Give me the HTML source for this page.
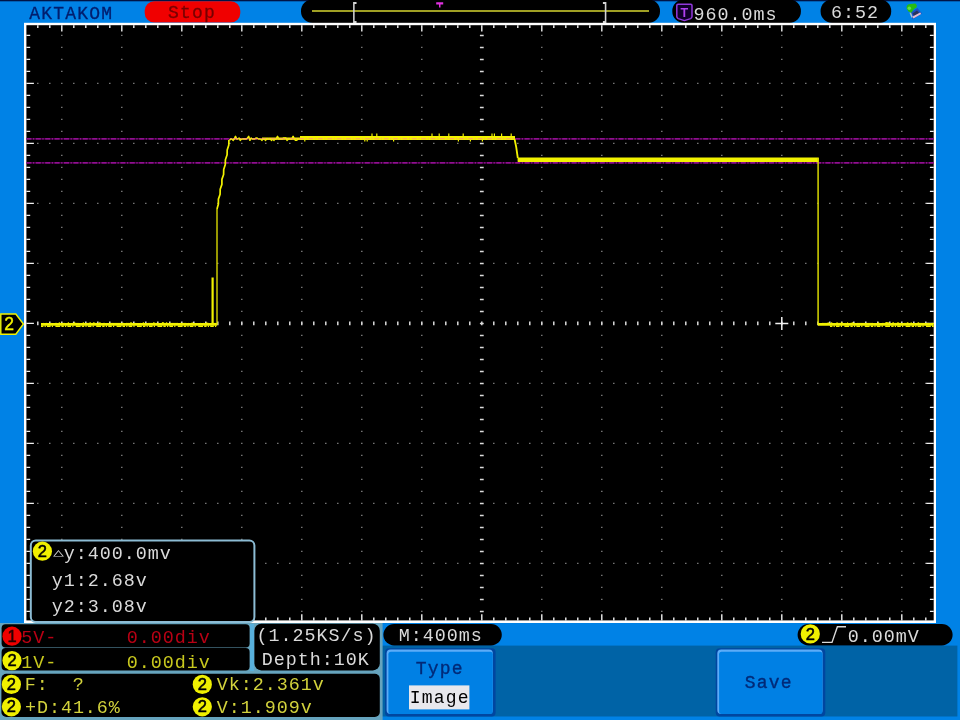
<!DOCTYPE html>
<html lang="en">
<head>
<meta charset="utf-8">
<title>AKTAKOM oscilloscope</title>
<style>
html,body{margin:0;padding:0;background:#0082E6;overflow:hidden;}
body{width:960px;height:720px;}
svg{display:block;position:absolute;left:0;top:0;filter:blur(0.45px);}
text{font-family:"Liberation Mono","DejaVu Sans Mono",monospace;font-size:18.4px;letter-spacing:0.96px;white-space:pre;}
text.lt{font-size:18px;letter-spacing:1.2px;}
text.br{font-size:21px;letter-spacing:0;font-weight:bold;}
text.ti{font-family:"Liberation Sans","DejaVu Sans",sans-serif;font-size:12.5px;font-weight:bold;letter-spacing:0;}
text.tr{font-family:"DejaVu Sans Mono","DejaVu Sans","Liberation Mono",monospace;font-size:13px;letter-spacing:0;}
text.cn{font-family:"Liberation Sans","DejaVu Sans",sans-serif;font-size:16.5px;letter-spacing:0;}
</style>
</head>
<body>
<svg width="960" height="720" viewBox="0 0 960 720">
<rect x="0" y="0" width="960" height="720" fill="#0082E6"/>
<rect x="0" y="0" width="960" height="1.3" fill="#001446"/>
<text x="29.3" y="18.9" fill="#001E6E" class="lt" stroke="#001E6E" stroke-width="0.3">AKTAKOM</text>
<rect x="144.7" y="1.2" width="95.6" height="21.4" rx="9.5" fill="#F00000"/>
<text x="168.1" y="17.6" fill="#780000" class="lt" stroke="#780000" stroke-width="0.3">Stop</text>
<rect x="301" y="-0.5" width="359" height="23.4" rx="11.5" fill="#000"/>
<line x1="312" y1="11.1" x2="649" y2="11.1" stroke="#D6D630" stroke-width="1.5"/>
<text x="0" y="0" transform="translate(351.1 17.9) scale(0.55 1.05)" fill="#D4D4D4" class="br">[</text>
<text x="0" y="0" transform="translate(601.5 17.9) scale(0.55 1.05)" fill="#D4D4D4" class="br">]</text>
<path d="M436.2 2.3 H443.2 V4.6 H440.5 V7.4 H439 V4.6 H436.2 Z" fill="#E030E0"/>
<rect x="672.3" y="-0.5" width="128.6" height="23.4" rx="11.5" fill="#000"/>
<path d="M678 4.3 H690.8 Q692 4.3 692 5.5 V16.6 Q692 18 690.6 18.6 L684.4 20.6 L678.2 18.6 Q676.8 18 676.8 16.6 V5.5 Q676.8 4.3 678 4.3 Z" fill="#10002A" stroke="#9238DC" stroke-width="1.5" stroke-linejoin="round"/>
<text x="684.4" y="16.9" fill="#B040F0" class="ti" text-anchor="middle">T</text>
<text x="693.5" y="19.5" fill="#DADADA" >960.0ms</text>
<rect x="820.6" y="-0.5" width="70.6" height="23.4" rx="11.5" fill="#000"/>
<text x="831.1" y="18.0" fill="#DADADA" >6:52</text>
<path d="M910 13 L917.4 8 L922 13.4 L912.8 19.6 Z" fill="#1C50C4"/>
<path d="M912.6 13.6 L917 10.6 L919.2 13 L914.4 16.2 Z" fill="#28345C"/>
<path d="M912.6 16.6 L920.2 12.4 L921.2 14 L913.4 18.6 Z" fill="#E4BCD0"/>
<path d="M910.2 12.4 L912.2 17.6" stroke="#A8C4D0" stroke-width="1.5" fill="none"/>
<path d="M906.6 8.6 Q906 4 910.4 3.9 L915.4 3.5 Q917.6 5 916.6 7.4 L914 9 L912.4 11.2 L911.2 12.8 L908.4 11.6 Z" fill="#28BC10"/>
<circle cx="909.3" cy="8.2" r="1.8" fill="#60E048"/>
<rect x="24.0" y="22.8" width="912.0" height="600.2" fill="#fff"/>
<rect x="26.4" y="25.2" width="907.3000000000001" height="595.1999999999999" fill="#000"/>
<path d="M61.1 35.4h1.4M61.1 47.4h1.4M61.1 59.4h1.4M61.1 71.4h1.4M61.1 83.4h1.4M61.1 95.4h1.4M61.1 107.4h1.4M61.1 119.4h1.4M61.1 131.4h1.4M61.1 143.4h1.4M61.1 155.4h1.4M61.1 167.4h1.4M61.1 179.4h1.4M61.1 191.4h1.4M61.1 203.4h1.4M61.1 215.4h1.4M61.1 227.4h1.4M61.1 239.4h1.4M61.1 251.4h1.4M61.1 263.4h1.4M61.1 275.4h1.4M61.1 287.4h1.4M61.1 299.4h1.4M61.1 311.4h1.4M61.1 323.4h1.4M61.1 335.4h1.4M61.1 347.4h1.4M61.1 359.4h1.4M61.1 371.4h1.4M61.1 383.4h1.4M61.1 395.4h1.4M61.1 407.4h1.4M61.1 419.4h1.4M61.1 431.4h1.4M61.1 443.4h1.4M61.1 455.4h1.4M61.1 467.4h1.4M61.1 479.4h1.4M61.1 491.4h1.4M61.1 503.4h1.4M61.1 515.4h1.4M61.1 527.4h1.4M61.1 539.4h1.4M61.1 551.4h1.4M61.1 563.4h1.4M61.1 575.4h1.4M61.1 587.4h1.4M61.1 599.4h1.4M61.1 611.4h1.4M121.1 35.4h1.4M121.1 47.4h1.4M121.1 59.4h1.4M121.1 71.4h1.4M121.1 83.4h1.4M121.1 95.4h1.4M121.1 107.4h1.4M121.1 119.4h1.4M121.1 131.4h1.4M121.1 143.4h1.4M121.1 155.4h1.4M121.1 167.4h1.4M121.1 179.4h1.4M121.1 191.4h1.4M121.1 203.4h1.4M121.1 215.4h1.4M121.1 227.4h1.4M121.1 239.4h1.4M121.1 251.4h1.4M121.1 263.4h1.4M121.1 275.4h1.4M121.1 287.4h1.4M121.1 299.4h1.4M121.1 311.4h1.4M121.1 323.4h1.4M121.1 335.4h1.4M121.1 347.4h1.4M121.1 359.4h1.4M121.1 371.4h1.4M121.1 383.4h1.4M121.1 395.4h1.4M121.1 407.4h1.4M121.1 419.4h1.4M121.1 431.4h1.4M121.1 443.4h1.4M121.1 455.4h1.4M121.1 467.4h1.4M121.1 479.4h1.4M121.1 491.4h1.4M121.1 503.4h1.4M121.1 515.4h1.4M121.1 527.4h1.4M121.1 539.4h1.4M121.1 551.4h1.4M121.1 563.4h1.4M121.1 575.4h1.4M121.1 587.4h1.4M121.1 599.4h1.4M121.1 611.4h1.4M181.1 35.4h1.4M181.1 47.4h1.4M181.1 59.4h1.4M181.1 71.4h1.4M181.1 83.4h1.4M181.1 95.4h1.4M181.1 107.4h1.4M181.1 119.4h1.4M181.1 131.4h1.4M181.1 143.4h1.4M181.1 155.4h1.4M181.1 167.4h1.4M181.1 179.4h1.4M181.1 191.4h1.4M181.1 203.4h1.4M181.1 215.4h1.4M181.1 227.4h1.4M181.1 239.4h1.4M181.1 251.4h1.4M181.1 263.4h1.4M181.1 275.4h1.4M181.1 287.4h1.4M181.1 299.4h1.4M181.1 311.4h1.4M181.1 323.4h1.4M181.1 335.4h1.4M181.1 347.4h1.4M181.1 359.4h1.4M181.1 371.4h1.4M181.1 383.4h1.4M181.1 395.4h1.4M181.1 407.4h1.4M181.1 419.4h1.4M181.1 431.4h1.4M181.1 443.4h1.4M181.1 455.4h1.4M181.1 467.4h1.4M181.1 479.4h1.4M181.1 491.4h1.4M181.1 503.4h1.4M181.1 515.4h1.4M181.1 527.4h1.4M181.1 539.4h1.4M181.1 551.4h1.4M181.1 563.4h1.4M181.1 575.4h1.4M181.1 587.4h1.4M181.1 599.4h1.4M181.1 611.4h1.4M241.1 35.4h1.4M241.1 47.4h1.4M241.1 59.4h1.4M241.1 71.4h1.4M241.1 83.4h1.4M241.1 95.4h1.4M241.1 107.4h1.4M241.1 119.4h1.4M241.1 131.4h1.4M241.1 143.4h1.4M241.1 155.4h1.4M241.1 167.4h1.4M241.1 179.4h1.4M241.1 191.4h1.4M241.1 203.4h1.4M241.1 215.4h1.4M241.1 227.4h1.4M241.1 239.4h1.4M241.1 251.4h1.4M241.1 263.4h1.4M241.1 275.4h1.4M241.1 287.4h1.4M241.1 299.4h1.4M241.1 311.4h1.4M241.1 323.4h1.4M241.1 335.4h1.4M241.1 347.4h1.4M241.1 359.4h1.4M241.1 371.4h1.4M241.1 383.4h1.4M241.1 395.4h1.4M241.1 407.4h1.4M241.1 419.4h1.4M241.1 431.4h1.4M241.1 443.4h1.4M241.1 455.4h1.4M241.1 467.4h1.4M241.1 479.4h1.4M241.1 491.4h1.4M241.1 503.4h1.4M241.1 515.4h1.4M241.1 527.4h1.4M241.1 539.4h1.4M241.1 551.4h1.4M241.1 563.4h1.4M241.1 575.4h1.4M241.1 587.4h1.4M241.1 599.4h1.4M241.1 611.4h1.4M301.1 35.4h1.4M301.1 47.4h1.4M301.1 59.4h1.4M301.1 71.4h1.4M301.1 83.4h1.4M301.1 95.4h1.4M301.1 107.4h1.4M301.1 119.4h1.4M301.1 131.4h1.4M301.1 143.4h1.4M301.1 155.4h1.4M301.1 167.4h1.4M301.1 179.4h1.4M301.1 191.4h1.4M301.1 203.4h1.4M301.1 215.4h1.4M301.1 227.4h1.4M301.1 239.4h1.4M301.1 251.4h1.4M301.1 263.4h1.4M301.1 275.4h1.4M301.1 287.4h1.4M301.1 299.4h1.4M301.1 311.4h1.4M301.1 323.4h1.4M301.1 335.4h1.4M301.1 347.4h1.4M301.1 359.4h1.4M301.1 371.4h1.4M301.1 383.4h1.4M301.1 395.4h1.4M301.1 407.4h1.4M301.1 419.4h1.4M301.1 431.4h1.4M301.1 443.4h1.4M301.1 455.4h1.4M301.1 467.4h1.4M301.1 479.4h1.4M301.1 491.4h1.4M301.1 503.4h1.4M301.1 515.4h1.4M301.1 527.4h1.4M301.1 539.4h1.4M301.1 551.4h1.4M301.1 563.4h1.4M301.1 575.4h1.4M301.1 587.4h1.4M301.1 599.4h1.4M301.1 611.4h1.4M361.1 35.4h1.4M361.1 47.4h1.4M361.1 59.4h1.4M361.1 71.4h1.4M361.1 83.4h1.4M361.1 95.4h1.4M361.1 107.4h1.4M361.1 119.4h1.4M361.1 131.4h1.4M361.1 143.4h1.4M361.1 155.4h1.4M361.1 167.4h1.4M361.1 179.4h1.4M361.1 191.4h1.4M361.1 203.4h1.4M361.1 215.4h1.4M361.1 227.4h1.4M361.1 239.4h1.4M361.1 251.4h1.4M361.1 263.4h1.4M361.1 275.4h1.4M361.1 287.4h1.4M361.1 299.4h1.4M361.1 311.4h1.4M361.1 323.4h1.4M361.1 335.4h1.4M361.1 347.4h1.4M361.1 359.4h1.4M361.1 371.4h1.4M361.1 383.4h1.4M361.1 395.4h1.4M361.1 407.4h1.4M361.1 419.4h1.4M361.1 431.4h1.4M361.1 443.4h1.4M361.1 455.4h1.4M361.1 467.4h1.4M361.1 479.4h1.4M361.1 491.4h1.4M361.1 503.4h1.4M361.1 515.4h1.4M361.1 527.4h1.4M361.1 539.4h1.4M361.1 551.4h1.4M361.1 563.4h1.4M361.1 575.4h1.4M361.1 587.4h1.4M361.1 599.4h1.4M361.1 611.4h1.4M421.1 35.4h1.4M421.1 47.4h1.4M421.1 59.4h1.4M421.1 71.4h1.4M421.1 83.4h1.4M421.1 95.4h1.4M421.1 107.4h1.4M421.1 119.4h1.4M421.1 131.4h1.4M421.1 143.4h1.4M421.1 155.4h1.4M421.1 167.4h1.4M421.1 179.4h1.4M421.1 191.4h1.4M421.1 203.4h1.4M421.1 215.4h1.4M421.1 227.4h1.4M421.1 239.4h1.4M421.1 251.4h1.4M421.1 263.4h1.4M421.1 275.4h1.4M421.1 287.4h1.4M421.1 299.4h1.4M421.1 311.4h1.4M421.1 323.4h1.4M421.1 335.4h1.4M421.1 347.4h1.4M421.1 359.4h1.4M421.1 371.4h1.4M421.1 383.4h1.4M421.1 395.4h1.4M421.1 407.4h1.4M421.1 419.4h1.4M421.1 431.4h1.4M421.1 443.4h1.4M421.1 455.4h1.4M421.1 467.4h1.4M421.1 479.4h1.4M421.1 491.4h1.4M421.1 503.4h1.4M421.1 515.4h1.4M421.1 527.4h1.4M421.1 539.4h1.4M421.1 551.4h1.4M421.1 563.4h1.4M421.1 575.4h1.4M421.1 587.4h1.4M421.1 599.4h1.4M421.1 611.4h1.4M541.1 35.4h1.4M541.1 47.4h1.4M541.1 59.4h1.4M541.1 71.4h1.4M541.1 83.4h1.4M541.1 95.4h1.4M541.1 107.4h1.4M541.1 119.4h1.4M541.1 131.4h1.4M541.1 143.4h1.4M541.1 155.4h1.4M541.1 167.4h1.4M541.1 179.4h1.4M541.1 191.4h1.4M541.1 203.4h1.4M541.1 215.4h1.4M541.1 227.4h1.4M541.1 239.4h1.4M541.1 251.4h1.4M541.1 263.4h1.4M541.1 275.4h1.4M541.1 287.4h1.4M541.1 299.4h1.4M541.1 311.4h1.4M541.1 323.4h1.4M541.1 335.4h1.4M541.1 347.4h1.4M541.1 359.4h1.4M541.1 371.4h1.4M541.1 383.4h1.4M541.1 395.4h1.4M541.1 407.4h1.4M541.1 419.4h1.4M541.1 431.4h1.4M541.1 443.4h1.4M541.1 455.4h1.4M541.1 467.4h1.4M541.1 479.4h1.4M541.1 491.4h1.4M541.1 503.4h1.4M541.1 515.4h1.4M541.1 527.4h1.4M541.1 539.4h1.4M541.1 551.4h1.4M541.1 563.4h1.4M541.1 575.4h1.4M541.1 587.4h1.4M541.1 599.4h1.4M541.1 611.4h1.4M601.1 35.4h1.4M601.1 47.4h1.4M601.1 59.4h1.4M601.1 71.4h1.4M601.1 83.4h1.4M601.1 95.4h1.4M601.1 107.4h1.4M601.1 119.4h1.4M601.1 131.4h1.4M601.1 143.4h1.4M601.1 155.4h1.4M601.1 167.4h1.4M601.1 179.4h1.4M601.1 191.4h1.4M601.1 203.4h1.4M601.1 215.4h1.4M601.1 227.4h1.4M601.1 239.4h1.4M601.1 251.4h1.4M601.1 263.4h1.4M601.1 275.4h1.4M601.1 287.4h1.4M601.1 299.4h1.4M601.1 311.4h1.4M601.1 323.4h1.4M601.1 335.4h1.4M601.1 347.4h1.4M601.1 359.4h1.4M601.1 371.4h1.4M601.1 383.4h1.4M601.1 395.4h1.4M601.1 407.4h1.4M601.1 419.4h1.4M601.1 431.4h1.4M601.1 443.4h1.4M601.1 455.4h1.4M601.1 467.4h1.4M601.1 479.4h1.4M601.1 491.4h1.4M601.1 503.4h1.4M601.1 515.4h1.4M601.1 527.4h1.4M601.1 539.4h1.4M601.1 551.4h1.4M601.1 563.4h1.4M601.1 575.4h1.4M601.1 587.4h1.4M601.1 599.4h1.4M601.1 611.4h1.4M661.1 35.4h1.4M661.1 47.4h1.4M661.1 59.4h1.4M661.1 71.4h1.4M661.1 83.4h1.4M661.1 95.4h1.4M661.1 107.4h1.4M661.1 119.4h1.4M661.1 131.4h1.4M661.1 143.4h1.4M661.1 155.4h1.4M661.1 167.4h1.4M661.1 179.4h1.4M661.1 191.4h1.4M661.1 203.4h1.4M661.1 215.4h1.4M661.1 227.4h1.4M661.1 239.4h1.4M661.1 251.4h1.4M661.1 263.4h1.4M661.1 275.4h1.4M661.1 287.4h1.4M661.1 299.4h1.4M661.1 311.4h1.4M661.1 323.4h1.4M661.1 335.4h1.4M661.1 347.4h1.4M661.1 359.4h1.4M661.1 371.4h1.4M661.1 383.4h1.4M661.1 395.4h1.4M661.1 407.4h1.4M661.1 419.4h1.4M661.1 431.4h1.4M661.1 443.4h1.4M661.1 455.4h1.4M661.1 467.4h1.4M661.1 479.4h1.4M661.1 491.4h1.4M661.1 503.4h1.4M661.1 515.4h1.4M661.1 527.4h1.4M661.1 539.4h1.4M661.1 551.4h1.4M661.1 563.4h1.4M661.1 575.4h1.4M661.1 587.4h1.4M661.1 599.4h1.4M661.1 611.4h1.4M721.1 35.4h1.4M721.1 47.4h1.4M721.1 59.4h1.4M721.1 71.4h1.4M721.1 83.4h1.4M721.1 95.4h1.4M721.1 107.4h1.4M721.1 119.4h1.4M721.1 131.4h1.4M721.1 143.4h1.4M721.1 155.4h1.4M721.1 167.4h1.4M721.1 179.4h1.4M721.1 191.4h1.4M721.1 203.4h1.4M721.1 215.4h1.4M721.1 227.4h1.4M721.1 239.4h1.4M721.1 251.4h1.4M721.1 263.4h1.4M721.1 275.4h1.4M721.1 287.4h1.4M721.1 299.4h1.4M721.1 311.4h1.4M721.1 323.4h1.4M721.1 335.4h1.4M721.1 347.4h1.4M721.1 359.4h1.4M721.1 371.4h1.4M721.1 383.4h1.4M721.1 395.4h1.4M721.1 407.4h1.4M721.1 419.4h1.4M721.1 431.4h1.4M721.1 443.4h1.4M721.1 455.4h1.4M721.1 467.4h1.4M721.1 479.4h1.4M721.1 491.4h1.4M721.1 503.4h1.4M721.1 515.4h1.4M721.1 527.4h1.4M721.1 539.4h1.4M721.1 551.4h1.4M721.1 563.4h1.4M721.1 575.4h1.4M721.1 587.4h1.4M721.1 599.4h1.4M721.1 611.4h1.4M781.1 35.4h1.4M781.1 47.4h1.4M781.1 59.4h1.4M781.1 71.4h1.4M781.1 83.4h1.4M781.1 95.4h1.4M781.1 107.4h1.4M781.1 119.4h1.4M781.1 131.4h1.4M781.1 143.4h1.4M781.1 155.4h1.4M781.1 167.4h1.4M781.1 179.4h1.4M781.1 191.4h1.4M781.1 203.4h1.4M781.1 215.4h1.4M781.1 227.4h1.4M781.1 239.4h1.4M781.1 251.4h1.4M781.1 263.4h1.4M781.1 275.4h1.4M781.1 287.4h1.4M781.1 299.4h1.4M781.1 311.4h1.4M781.1 323.4h1.4M781.1 335.4h1.4M781.1 347.4h1.4M781.1 359.4h1.4M781.1 371.4h1.4M781.1 383.4h1.4M781.1 395.4h1.4M781.1 407.4h1.4M781.1 419.4h1.4M781.1 431.4h1.4M781.1 443.4h1.4M781.1 455.4h1.4M781.1 467.4h1.4M781.1 479.4h1.4M781.1 491.4h1.4M781.1 503.4h1.4M781.1 515.4h1.4M781.1 527.4h1.4M781.1 539.4h1.4M781.1 551.4h1.4M781.1 563.4h1.4M781.1 575.4h1.4M781.1 587.4h1.4M781.1 599.4h1.4M781.1 611.4h1.4M841.1 35.4h1.4M841.1 47.4h1.4M841.1 59.4h1.4M841.1 71.4h1.4M841.1 83.4h1.4M841.1 95.4h1.4M841.1 107.4h1.4M841.1 119.4h1.4M841.1 131.4h1.4M841.1 143.4h1.4M841.1 155.4h1.4M841.1 167.4h1.4M841.1 179.4h1.4M841.1 191.4h1.4M841.1 203.4h1.4M841.1 215.4h1.4M841.1 227.4h1.4M841.1 239.4h1.4M841.1 251.4h1.4M841.1 263.4h1.4M841.1 275.4h1.4M841.1 287.4h1.4M841.1 299.4h1.4M841.1 311.4h1.4M841.1 323.4h1.4M841.1 335.4h1.4M841.1 347.4h1.4M841.1 359.4h1.4M841.1 371.4h1.4M841.1 383.4h1.4M841.1 395.4h1.4M841.1 407.4h1.4M841.1 419.4h1.4M841.1 431.4h1.4M841.1 443.4h1.4M841.1 455.4h1.4M841.1 467.4h1.4M841.1 479.4h1.4M841.1 491.4h1.4M841.1 503.4h1.4M841.1 515.4h1.4M841.1 527.4h1.4M841.1 539.4h1.4M841.1 551.4h1.4M841.1 563.4h1.4M841.1 575.4h1.4M841.1 587.4h1.4M841.1 599.4h1.4M841.1 611.4h1.4M901.1 35.4h1.4M901.1 47.4h1.4M901.1 59.4h1.4M901.1 71.4h1.4M901.1 83.4h1.4M901.1 95.4h1.4M901.1 107.4h1.4M901.1 119.4h1.4M901.1 131.4h1.4M901.1 143.4h1.4M901.1 155.4h1.4M901.1 167.4h1.4M901.1 179.4h1.4M901.1 191.4h1.4M901.1 203.4h1.4M901.1 215.4h1.4M901.1 227.4h1.4M901.1 239.4h1.4M901.1 251.4h1.4M901.1 263.4h1.4M901.1 275.4h1.4M901.1 287.4h1.4M901.1 299.4h1.4M901.1 311.4h1.4M901.1 323.4h1.4M901.1 335.4h1.4M901.1 347.4h1.4M901.1 359.4h1.4M901.1 371.4h1.4M901.1 383.4h1.4M901.1 395.4h1.4M901.1 407.4h1.4M901.1 419.4h1.4M901.1 431.4h1.4M901.1 443.4h1.4M901.1 455.4h1.4M901.1 467.4h1.4M901.1 479.4h1.4M901.1 491.4h1.4M901.1 503.4h1.4M901.1 515.4h1.4M901.1 527.4h1.4M901.1 539.4h1.4M901.1 551.4h1.4M901.1 563.4h1.4M901.1 575.4h1.4M901.1 587.4h1.4M901.1 599.4h1.4M901.1 611.4h1.4M37.1 83.4h1.4M49.1 83.4h1.4M73.1 83.4h1.4M85.1 83.4h1.4M97.1 83.4h1.4M109.1 83.4h1.4M133.1 83.4h1.4M145.1 83.4h1.4M157.1 83.4h1.4M169.1 83.4h1.4M193.1 83.4h1.4M205.1 83.4h1.4M217.1 83.4h1.4M229.1 83.4h1.4M253.1 83.4h1.4M265.1 83.4h1.4M277.1 83.4h1.4M289.1 83.4h1.4M313.1 83.4h1.4M325.1 83.4h1.4M337.1 83.4h1.4M349.1 83.4h1.4M373.1 83.4h1.4M385.1 83.4h1.4M397.1 83.4h1.4M409.1 83.4h1.4M433.1 83.4h1.4M445.1 83.4h1.4M457.1 83.4h1.4M469.1 83.4h1.4M493.1 83.4h1.4M505.1 83.4h1.4M517.1 83.4h1.4M529.1 83.4h1.4M553.1 83.4h1.4M565.1 83.4h1.4M577.1 83.4h1.4M589.1 83.4h1.4M613.1 83.4h1.4M625.1 83.4h1.4M637.1 83.4h1.4M649.1 83.4h1.4M673.1 83.4h1.4M685.1 83.4h1.4M697.1 83.4h1.4M709.1 83.4h1.4M733.1 83.4h1.4M745.1 83.4h1.4M757.1 83.4h1.4M769.1 83.4h1.4M793.1 83.4h1.4M805.1 83.4h1.4M817.1 83.4h1.4M829.1 83.4h1.4M853.1 83.4h1.4M865.1 83.4h1.4M877.1 83.4h1.4M889.1 83.4h1.4M913.1 83.4h1.4M925.1 83.4h1.4M37.1 143.4h1.4M49.1 143.4h1.4M73.1 143.4h1.4M85.1 143.4h1.4M97.1 143.4h1.4M109.1 143.4h1.4M133.1 143.4h1.4M145.1 143.4h1.4M157.1 143.4h1.4M169.1 143.4h1.4M193.1 143.4h1.4M205.1 143.4h1.4M217.1 143.4h1.4M229.1 143.4h1.4M253.1 143.4h1.4M265.1 143.4h1.4M277.1 143.4h1.4M289.1 143.4h1.4M313.1 143.4h1.4M325.1 143.4h1.4M337.1 143.4h1.4M349.1 143.4h1.4M373.1 143.4h1.4M385.1 143.4h1.4M397.1 143.4h1.4M409.1 143.4h1.4M433.1 143.4h1.4M445.1 143.4h1.4M457.1 143.4h1.4M469.1 143.4h1.4M493.1 143.4h1.4M505.1 143.4h1.4M517.1 143.4h1.4M529.1 143.4h1.4M553.1 143.4h1.4M565.1 143.4h1.4M577.1 143.4h1.4M589.1 143.4h1.4M613.1 143.4h1.4M625.1 143.4h1.4M637.1 143.4h1.4M649.1 143.4h1.4M673.1 143.4h1.4M685.1 143.4h1.4M697.1 143.4h1.4M709.1 143.4h1.4M733.1 143.4h1.4M745.1 143.4h1.4M757.1 143.4h1.4M769.1 143.4h1.4M793.1 143.4h1.4M805.1 143.4h1.4M817.1 143.4h1.4M829.1 143.4h1.4M853.1 143.4h1.4M865.1 143.4h1.4M877.1 143.4h1.4M889.1 143.4h1.4M913.1 143.4h1.4M925.1 143.4h1.4M37.1 203.4h1.4M49.1 203.4h1.4M73.1 203.4h1.4M85.1 203.4h1.4M97.1 203.4h1.4M109.1 203.4h1.4M133.1 203.4h1.4M145.1 203.4h1.4M157.1 203.4h1.4M169.1 203.4h1.4M193.1 203.4h1.4M205.1 203.4h1.4M217.1 203.4h1.4M229.1 203.4h1.4M253.1 203.4h1.4M265.1 203.4h1.4M277.1 203.4h1.4M289.1 203.4h1.4M313.1 203.4h1.4M325.1 203.4h1.4M337.1 203.4h1.4M349.1 203.4h1.4M373.1 203.4h1.4M385.1 203.4h1.4M397.1 203.4h1.4M409.1 203.4h1.4M433.1 203.4h1.4M445.1 203.4h1.4M457.1 203.4h1.4M469.1 203.4h1.4M493.1 203.4h1.4M505.1 203.4h1.4M517.1 203.4h1.4M529.1 203.4h1.4M553.1 203.4h1.4M565.1 203.4h1.4M577.1 203.4h1.4M589.1 203.4h1.4M613.1 203.4h1.4M625.1 203.4h1.4M637.1 203.4h1.4M649.1 203.4h1.4M673.1 203.4h1.4M685.1 203.4h1.4M697.1 203.4h1.4M709.1 203.4h1.4M733.1 203.4h1.4M745.1 203.4h1.4M757.1 203.4h1.4M769.1 203.4h1.4M793.1 203.4h1.4M805.1 203.4h1.4M817.1 203.4h1.4M829.1 203.4h1.4M853.1 203.4h1.4M865.1 203.4h1.4M877.1 203.4h1.4M889.1 203.4h1.4M913.1 203.4h1.4M925.1 203.4h1.4M37.1 263.4h1.4M49.1 263.4h1.4M73.1 263.4h1.4M85.1 263.4h1.4M97.1 263.4h1.4M109.1 263.4h1.4M133.1 263.4h1.4M145.1 263.4h1.4M157.1 263.4h1.4M169.1 263.4h1.4M193.1 263.4h1.4M205.1 263.4h1.4M217.1 263.4h1.4M229.1 263.4h1.4M253.1 263.4h1.4M265.1 263.4h1.4M277.1 263.4h1.4M289.1 263.4h1.4M313.1 263.4h1.4M325.1 263.4h1.4M337.1 263.4h1.4M349.1 263.4h1.4M373.1 263.4h1.4M385.1 263.4h1.4M397.1 263.4h1.4M409.1 263.4h1.4M433.1 263.4h1.4M445.1 263.4h1.4M457.1 263.4h1.4M469.1 263.4h1.4M493.1 263.4h1.4M505.1 263.4h1.4M517.1 263.4h1.4M529.1 263.4h1.4M553.1 263.4h1.4M565.1 263.4h1.4M577.1 263.4h1.4M589.1 263.4h1.4M613.1 263.4h1.4M625.1 263.4h1.4M637.1 263.4h1.4M649.1 263.4h1.4M673.1 263.4h1.4M685.1 263.4h1.4M697.1 263.4h1.4M709.1 263.4h1.4M733.1 263.4h1.4M745.1 263.4h1.4M757.1 263.4h1.4M769.1 263.4h1.4M793.1 263.4h1.4M805.1 263.4h1.4M817.1 263.4h1.4M829.1 263.4h1.4M853.1 263.4h1.4M865.1 263.4h1.4M877.1 263.4h1.4M889.1 263.4h1.4M913.1 263.4h1.4M925.1 263.4h1.4M37.1 383.4h1.4M49.1 383.4h1.4M73.1 383.4h1.4M85.1 383.4h1.4M97.1 383.4h1.4M109.1 383.4h1.4M133.1 383.4h1.4M145.1 383.4h1.4M157.1 383.4h1.4M169.1 383.4h1.4M193.1 383.4h1.4M205.1 383.4h1.4M217.1 383.4h1.4M229.1 383.4h1.4M253.1 383.4h1.4M265.1 383.4h1.4M277.1 383.4h1.4M289.1 383.4h1.4M313.1 383.4h1.4M325.1 383.4h1.4M337.1 383.4h1.4M349.1 383.4h1.4M373.1 383.4h1.4M385.1 383.4h1.4M397.1 383.4h1.4M409.1 383.4h1.4M433.1 383.4h1.4M445.1 383.4h1.4M457.1 383.4h1.4M469.1 383.4h1.4M493.1 383.4h1.4M505.1 383.4h1.4M517.1 383.4h1.4M529.1 383.4h1.4M553.1 383.4h1.4M565.1 383.4h1.4M577.1 383.4h1.4M589.1 383.4h1.4M613.1 383.4h1.4M625.1 383.4h1.4M637.1 383.4h1.4M649.1 383.4h1.4M673.1 383.4h1.4M685.1 383.4h1.4M697.1 383.4h1.4M709.1 383.4h1.4M733.1 383.4h1.4M745.1 383.4h1.4M757.1 383.4h1.4M769.1 383.4h1.4M793.1 383.4h1.4M805.1 383.4h1.4M817.1 383.4h1.4M829.1 383.4h1.4M853.1 383.4h1.4M865.1 383.4h1.4M877.1 383.4h1.4M889.1 383.4h1.4M913.1 383.4h1.4M925.1 383.4h1.4M37.1 443.4h1.4M49.1 443.4h1.4M73.1 443.4h1.4M85.1 443.4h1.4M97.1 443.4h1.4M109.1 443.4h1.4M133.1 443.4h1.4M145.1 443.4h1.4M157.1 443.4h1.4M169.1 443.4h1.4M193.1 443.4h1.4M205.1 443.4h1.4M217.1 443.4h1.4M229.1 443.4h1.4M253.1 443.4h1.4M265.1 443.4h1.4M277.1 443.4h1.4M289.1 443.4h1.4M313.1 443.4h1.4M325.1 443.4h1.4M337.1 443.4h1.4M349.1 443.4h1.4M373.1 443.4h1.4M385.1 443.4h1.4M397.1 443.4h1.4M409.1 443.4h1.4M433.1 443.4h1.4M445.1 443.4h1.4M457.1 443.4h1.4M469.1 443.4h1.4M493.1 443.4h1.4M505.1 443.4h1.4M517.1 443.4h1.4M529.1 443.4h1.4M553.1 443.4h1.4M565.1 443.4h1.4M577.1 443.4h1.4M589.1 443.4h1.4M613.1 443.4h1.4M625.1 443.4h1.4M637.1 443.4h1.4M649.1 443.4h1.4M673.1 443.4h1.4M685.1 443.4h1.4M697.1 443.4h1.4M709.1 443.4h1.4M733.1 443.4h1.4M745.1 443.4h1.4M757.1 443.4h1.4M769.1 443.4h1.4M793.1 443.4h1.4M805.1 443.4h1.4M817.1 443.4h1.4M829.1 443.4h1.4M853.1 443.4h1.4M865.1 443.4h1.4M877.1 443.4h1.4M889.1 443.4h1.4M913.1 443.4h1.4M925.1 443.4h1.4M37.1 503.4h1.4M49.1 503.4h1.4M73.1 503.4h1.4M85.1 503.4h1.4M97.1 503.4h1.4M109.1 503.4h1.4M133.1 503.4h1.4M145.1 503.4h1.4M157.1 503.4h1.4M169.1 503.4h1.4M193.1 503.4h1.4M205.1 503.4h1.4M217.1 503.4h1.4M229.1 503.4h1.4M253.1 503.4h1.4M265.1 503.4h1.4M277.1 503.4h1.4M289.1 503.4h1.4M313.1 503.4h1.4M325.1 503.4h1.4M337.1 503.4h1.4M349.1 503.4h1.4M373.1 503.4h1.4M385.1 503.4h1.4M397.1 503.4h1.4M409.1 503.4h1.4M433.1 503.4h1.4M445.1 503.4h1.4M457.1 503.4h1.4M469.1 503.4h1.4M493.1 503.4h1.4M505.1 503.4h1.4M517.1 503.4h1.4M529.1 503.4h1.4M553.1 503.4h1.4M565.1 503.4h1.4M577.1 503.4h1.4M589.1 503.4h1.4M613.1 503.4h1.4M625.1 503.4h1.4M637.1 503.4h1.4M649.1 503.4h1.4M673.1 503.4h1.4M685.1 503.4h1.4M697.1 503.4h1.4M709.1 503.4h1.4M733.1 503.4h1.4M745.1 503.4h1.4M757.1 503.4h1.4M769.1 503.4h1.4M793.1 503.4h1.4M805.1 503.4h1.4M817.1 503.4h1.4M829.1 503.4h1.4M853.1 503.4h1.4M865.1 503.4h1.4M877.1 503.4h1.4M889.1 503.4h1.4M913.1 503.4h1.4M925.1 503.4h1.4M37.1 563.4h1.4M49.1 563.4h1.4M73.1 563.4h1.4M85.1 563.4h1.4M97.1 563.4h1.4M109.1 563.4h1.4M133.1 563.4h1.4M145.1 563.4h1.4M157.1 563.4h1.4M169.1 563.4h1.4M193.1 563.4h1.4M205.1 563.4h1.4M217.1 563.4h1.4M229.1 563.4h1.4M253.1 563.4h1.4M265.1 563.4h1.4M277.1 563.4h1.4M289.1 563.4h1.4M313.1 563.4h1.4M325.1 563.4h1.4M337.1 563.4h1.4M349.1 563.4h1.4M373.1 563.4h1.4M385.1 563.4h1.4M397.1 563.4h1.4M409.1 563.4h1.4M433.1 563.4h1.4M445.1 563.4h1.4M457.1 563.4h1.4M469.1 563.4h1.4M493.1 563.4h1.4M505.1 563.4h1.4M517.1 563.4h1.4M529.1 563.4h1.4M553.1 563.4h1.4M565.1 563.4h1.4M577.1 563.4h1.4M589.1 563.4h1.4M613.1 563.4h1.4M625.1 563.4h1.4M637.1 563.4h1.4M649.1 563.4h1.4M673.1 563.4h1.4M685.1 563.4h1.4M697.1 563.4h1.4M709.1 563.4h1.4M733.1 563.4h1.4M745.1 563.4h1.4M757.1 563.4h1.4M769.1 563.4h1.4M793.1 563.4h1.4M805.1 563.4h1.4M817.1 563.4h1.4M829.1 563.4h1.4M853.1 563.4h1.4M865.1 563.4h1.4M877.1 563.4h1.4M889.1 563.4h1.4M913.1 563.4h1.4M925.1 563.4h1.4" stroke="#808080" stroke-width="1.4" fill="none"/>
<path d="M479.9 35.4h3.8M479.9 47.4h3.8M479.9 59.4h3.8M479.9 71.4h3.8M479.9 83.4h3.8M479.9 95.4h3.8M479.9 107.4h3.8M479.9 119.4h3.8M479.9 131.4h3.8M479.9 143.4h3.8M479.9 155.4h3.8M479.9 167.4h3.8M479.9 179.4h3.8M479.9 191.4h3.8M479.9 203.4h3.8M479.9 215.4h3.8M479.9 227.4h3.8M479.9 239.4h3.8M479.9 251.4h3.8M479.9 263.4h3.8M479.9 275.4h3.8M479.9 287.4h3.8M479.9 299.4h3.8M479.9 311.4h3.8M479.9 323.4h3.8M479.9 335.4h3.8M479.9 347.4h3.8M479.9 359.4h3.8M479.9 371.4h3.8M479.9 383.4h3.8M479.9 395.4h3.8M479.9 407.4h3.8M479.9 419.4h3.8M479.9 431.4h3.8M479.9 443.4h3.8M479.9 455.4h3.8M479.9 467.4h3.8M479.9 479.4h3.8M479.9 491.4h3.8M479.9 503.4h3.8M479.9 515.4h3.8M479.9 527.4h3.8M479.9 539.4h3.8M479.9 551.4h3.8M479.9 563.4h3.8M479.9 575.4h3.8M479.9 587.4h3.8M479.9 599.4h3.8M479.9 611.4h3.8M37.8 321.5v3.8M49.8 321.5v3.8M61.8 321.5v3.8M73.8 321.5v3.8M85.8 321.5v3.8M97.8 321.5v3.8M109.8 321.5v3.8M121.8 321.5v3.8M133.8 321.5v3.8M145.8 321.5v3.8M157.8 321.5v3.8M169.8 321.5v3.8M181.8 321.5v3.8M193.8 321.5v3.8M205.8 321.5v3.8M217.8 321.5v3.8M229.8 321.5v3.8M241.8 321.5v3.8M253.8 321.5v3.8M265.8 321.5v3.8M277.8 321.5v3.8M289.8 321.5v3.8M301.8 321.5v3.8M313.8 321.5v3.8M325.8 321.5v3.8M337.8 321.5v3.8M349.8 321.5v3.8M361.8 321.5v3.8M373.8 321.5v3.8M385.8 321.5v3.8M397.8 321.5v3.8M409.8 321.5v3.8M421.8 321.5v3.8M433.8 321.5v3.8M445.8 321.5v3.8M457.8 321.5v3.8M469.8 321.5v3.8M481.8 321.5v3.8M493.8 321.5v3.8M505.8 321.5v3.8M517.8 321.5v3.8M529.8 321.5v3.8M541.8 321.5v3.8M553.8 321.5v3.8M565.8 321.5v3.8M577.8 321.5v3.8M589.8 321.5v3.8M601.8 321.5v3.8M613.8 321.5v3.8M625.8 321.5v3.8M637.8 321.5v3.8M649.8 321.5v3.8M661.8 321.5v3.8M673.8 321.5v3.8M685.8 321.5v3.8M697.8 321.5v3.8M709.8 321.5v3.8M721.8 321.5v3.8M733.8 321.5v3.8M745.8 321.5v3.8M757.8 321.5v3.8M769.8 321.5v3.8M781.8 321.5v3.8M793.8 321.5v3.8M805.8 321.5v3.8M817.8 321.5v3.8M829.8 321.5v3.8M841.8 321.5v3.8M853.8 321.5v3.8M865.8 321.5v3.8M877.8 321.5v3.8M889.8 321.5v3.8M901.8 321.5v3.8M913.8 321.5v3.8M925.8 321.5v3.8" stroke="#DCDCDC" stroke-width="1.5" fill="none"/>
<path d="M37.8 25.2v2.8M37.8 620.4v-2.8M49.8 25.2v2.8M49.8 620.4v-2.8M61.8 25.2v6.2M61.8 620.4v-6.2M73.8 25.2v2.8M73.8 620.4v-2.8M85.8 25.2v2.8M85.8 620.4v-2.8M97.8 25.2v2.8M97.8 620.4v-2.8M109.8 25.2v2.8M109.8 620.4v-2.8M121.8 25.2v6.2M121.8 620.4v-6.2M133.8 25.2v2.8M133.8 620.4v-2.8M145.8 25.2v2.8M145.8 620.4v-2.8M157.8 25.2v2.8M157.8 620.4v-2.8M169.8 25.2v2.8M169.8 620.4v-2.8M181.8 25.2v6.2M181.8 620.4v-6.2M193.8 25.2v2.8M193.8 620.4v-2.8M205.8 25.2v2.8M205.8 620.4v-2.8M217.8 25.2v2.8M217.8 620.4v-2.8M229.8 25.2v2.8M229.8 620.4v-2.8M241.8 25.2v6.2M241.8 620.4v-6.2M253.8 25.2v2.8M253.8 620.4v-2.8M265.8 25.2v2.8M265.8 620.4v-2.8M277.8 25.2v2.8M277.8 620.4v-2.8M289.8 25.2v2.8M289.8 620.4v-2.8M301.8 25.2v6.2M301.8 620.4v-6.2M313.8 25.2v2.8M313.8 620.4v-2.8M325.8 25.2v2.8M325.8 620.4v-2.8M337.8 25.2v2.8M337.8 620.4v-2.8M349.8 25.2v2.8M349.8 620.4v-2.8M361.8 25.2v6.2M361.8 620.4v-6.2M373.8 25.2v2.8M373.8 620.4v-2.8M385.8 25.2v2.8M385.8 620.4v-2.8M397.8 25.2v2.8M397.8 620.4v-2.8M409.8 25.2v2.8M409.8 620.4v-2.8M421.8 25.2v6.2M421.8 620.4v-6.2M433.8 25.2v2.8M433.8 620.4v-2.8M445.8 25.2v2.8M445.8 620.4v-2.8M457.8 25.2v2.8M457.8 620.4v-2.8M469.8 25.2v2.8M469.8 620.4v-2.8M481.8 25.2v6.2M481.8 620.4v-6.2M493.8 25.2v2.8M493.8 620.4v-2.8M505.8 25.2v2.8M505.8 620.4v-2.8M517.8 25.2v2.8M517.8 620.4v-2.8M529.8 25.2v2.8M529.8 620.4v-2.8M541.8 25.2v6.2M541.8 620.4v-6.2M553.8 25.2v2.8M553.8 620.4v-2.8M565.8 25.2v2.8M565.8 620.4v-2.8M577.8 25.2v2.8M577.8 620.4v-2.8M589.8 25.2v2.8M589.8 620.4v-2.8M601.8 25.2v6.2M601.8 620.4v-6.2M613.8 25.2v2.8M613.8 620.4v-2.8M625.8 25.2v2.8M625.8 620.4v-2.8M637.8 25.2v2.8M637.8 620.4v-2.8M649.8 25.2v2.8M649.8 620.4v-2.8M661.8 25.2v6.2M661.8 620.4v-6.2M673.8 25.2v2.8M673.8 620.4v-2.8M685.8 25.2v2.8M685.8 620.4v-2.8M697.8 25.2v2.8M697.8 620.4v-2.8M709.8 25.2v2.8M709.8 620.4v-2.8M721.8 25.2v6.2M721.8 620.4v-6.2M733.8 25.2v2.8M733.8 620.4v-2.8M745.8 25.2v2.8M745.8 620.4v-2.8M757.8 25.2v2.8M757.8 620.4v-2.8M769.8 25.2v2.8M769.8 620.4v-2.8M781.8 25.2v6.2M781.8 620.4v-6.2M793.8 25.2v2.8M793.8 620.4v-2.8M805.8 25.2v2.8M805.8 620.4v-2.8M817.8 25.2v2.8M817.8 620.4v-2.8M829.8 25.2v2.8M829.8 620.4v-2.8M841.8 25.2v6.2M841.8 620.4v-6.2M853.8 25.2v2.8M853.8 620.4v-2.8M865.8 25.2v2.8M865.8 620.4v-2.8M877.8 25.2v2.8M877.8 620.4v-2.8M889.8 25.2v2.8M889.8 620.4v-2.8M901.8 25.2v6.2M901.8 620.4v-6.2M913.8 25.2v2.8M913.8 620.4v-2.8M925.8 25.2v2.8M925.8 620.4v-2.8M26.4 35.4h3.8M933.7 35.4h-3.8M26.4 47.4h3.8M933.7 47.4h-3.8M26.4 59.4h3.8M933.7 59.4h-3.8M26.4 71.4h3.8M933.7 71.4h-3.8M26.4 83.4h7.5M933.7 83.4h-7.5M26.4 95.4h3.8M933.7 95.4h-3.8M26.4 107.4h3.8M933.7 107.4h-3.8M26.4 119.4h3.8M933.7 119.4h-3.8M26.4 131.4h3.8M933.7 131.4h-3.8M26.4 143.4h7.5M933.7 143.4h-7.5M26.4 155.4h3.8M933.7 155.4h-3.8M26.4 167.4h3.8M933.7 167.4h-3.8M26.4 179.4h3.8M933.7 179.4h-3.8M26.4 191.4h3.8M933.7 191.4h-3.8M26.4 203.4h7.5M933.7 203.4h-7.5M26.4 215.4h3.8M933.7 215.4h-3.8M26.4 227.4h3.8M933.7 227.4h-3.8M26.4 239.4h3.8M933.7 239.4h-3.8M26.4 251.4h3.8M933.7 251.4h-3.8M26.4 263.4h7.5M933.7 263.4h-7.5M26.4 275.4h3.8M933.7 275.4h-3.8M26.4 287.4h3.8M933.7 287.4h-3.8M26.4 299.4h3.8M933.7 299.4h-3.8M26.4 311.4h3.8M933.7 311.4h-3.8M26.4 323.4h7.5M933.7 323.4h-7.5M26.4 335.4h3.8M933.7 335.4h-3.8M26.4 347.4h3.8M933.7 347.4h-3.8M26.4 359.4h3.8M933.7 359.4h-3.8M26.4 371.4h3.8M933.7 371.4h-3.8M26.4 383.4h7.5M933.7 383.4h-7.5M26.4 395.4h3.8M933.7 395.4h-3.8M26.4 407.4h3.8M933.7 407.4h-3.8M26.4 419.4h3.8M933.7 419.4h-3.8M26.4 431.4h3.8M933.7 431.4h-3.8M26.4 443.4h7.5M933.7 443.4h-7.5M26.4 455.4h3.8M933.7 455.4h-3.8M26.4 467.4h3.8M933.7 467.4h-3.8M26.4 479.4h3.8M933.7 479.4h-3.8M26.4 491.4h3.8M933.7 491.4h-3.8M26.4 503.4h7.5M933.7 503.4h-7.5M26.4 515.4h3.8M933.7 515.4h-3.8M26.4 527.4h3.8M933.7 527.4h-3.8M26.4 539.4h3.8M933.7 539.4h-3.8M26.4 551.4h3.8M933.7 551.4h-3.8M26.4 563.4h7.5M933.7 563.4h-7.5M26.4 575.4h3.8M933.7 575.4h-3.8M26.4 587.4h3.8M933.7 587.4h-3.8M26.4 599.4h3.8M933.7 599.4h-3.8M26.4 611.4h3.8M933.7 611.4h-3.8" stroke="#F0F0F0" stroke-width="1.4" fill="none"/>
<line x1="26.4" y1="138.8" x2="933.7" y2="138.8" stroke="#600060" stroke-width="1.3"/>
<line x1="26.4" y1="138.8" x2="933.7" y2="138.8" stroke="#A814A8" stroke-width="1.3" stroke-dasharray="5 1.6 1.2 1.6"/>
<line x1="26.4" y1="162.9" x2="933.7" y2="162.9" stroke="#600060" stroke-width="1.3"/>
<line x1="26.4" y1="162.9" x2="933.7" y2="162.9" stroke="#A814A8" stroke-width="1.3" stroke-dasharray="5 1.6 1.2 1.6"/>
<line x1="41" y1="324.4" x2="217" y2="324.4" stroke="#F2F200" stroke-width="2.6"/>
<line x1="41" y1="326.3" x2="217" y2="326.3" stroke="#F2F200" stroke-width="1.6" stroke-dasharray="2.4 1.2 1.2 1.2 3.6 1.2 1.2 2.4 4.8 1.2"/>
<path d="M41.0 323.4L42.2 324.4L43.4 323.4L44.6 324.4L45.8 323.4L47.0 323.4L48.2 324.4L49.4 323.4L50.6 324.4L51.8 323.4L53.0 324.4L54.2 324.4L55.4 323.4L56.6 323.4L57.8 324.4L59.0 322.6L60.2 323.4L61.4 323.4L62.6 323.4L63.8 323.4L65.0 323.4L66.2 324.4L67.4 323.4L68.6 322.6L69.8 324.4L71.0 324.4L72.2 323.4L73.4 323.4L74.6 322.6L75.8 323.4L77.0 323.4L78.2 323.4L79.4 323.4L80.6 324.4L81.8 324.4L83.0 322.6L84.2 323.4L85.4 323.4L86.6 323.4L87.8 323.4L89.0 323.4L90.2 322.6L91.4 323.4L92.6 323.4L93.8 322.6L95.0 323.4L96.2 323.4L97.4 323.4L98.6 323.4L99.8 322.6L101.0 323.4L102.2 324.4L103.4 323.4L104.6 323.4L105.8 324.4L107.0 323.4L108.2 324.4L109.4 323.4L110.6 323.4L111.8 323.4L113.0 323.4L114.2 323.4L115.4 323.4L116.6 323.4L117.8 323.4L119.0 323.4L120.2 323.4L121.4 323.4L122.6 323.4L123.8 323.4L125.0 324.4L126.2 323.4L127.4 323.4L128.6 323.4L129.8 323.4L131.0 322.6L132.2 323.4L133.4 323.4L134.6 324.4L135.8 323.4L137.0 324.4L138.2 324.4L139.4 324.4L140.6 323.4L141.8 324.4L143.0 322.6L144.2 323.4L145.4 323.4L146.6 324.4L147.8 323.4L149.0 323.4L150.2 323.4L151.4 323.4L152.6 323.4L153.8 322.6L155.0 323.4L156.2 323.4L157.4 323.4L158.6 323.4L159.8 324.4L161.0 324.4L162.2 322.6L163.4 322.6L164.6 323.4L165.8 323.4L167.0 322.6L168.2 324.4L169.4 323.4L170.6 323.4L171.8 323.4L173.0 323.4L174.2 323.4L175.4 323.4L176.6 323.4L177.8 323.4L179.0 324.4L180.2 323.4L181.4 323.4L182.6 323.4L183.8 323.4L185.0 323.4L186.2 323.4L187.4 324.4L188.6 323.4L189.8 324.4L191.0 324.4L192.2 322.6L193.4 324.4L194.6 323.4L195.8 324.4L197.0 324.4L198.2 324.4L199.4 324.4L200.6 323.4L201.8 324.4L203.0 323.4L204.2 323.4L205.4 324.4L206.6 322.6L207.8 323.4L209.0 323.4L210.2 324.4L211.4 323.4L212.6 323.4L213.8 323.4L215.0 323.4L216.0 323.4" stroke="#F2F200" stroke-width="1.0" fill="none" stroke-linejoin="round"/>
<line x1="212.6" y1="325" x2="212.6" y2="277.5" stroke="#F2F200" stroke-width="2.2"/>
<line x1="217" y1="325" x2="217" y2="209" stroke="#D8D800" stroke-width="1.4"/>
<path d="M217.0 209.0L218.4 204.1L218.4 199.1L220.1 194.2L220.2 189.3L221.9 184.4L221.9 179.4L223.6 174.5L223.7 169.6L225.3 164.6L225.4 159.7L227.1 154.8L227.2 149.9L228.8 144.9L228.9 140.0" stroke="#F2F200" stroke-width="1.7" fill="none" stroke-linejoin="round"/>
<path d="M229.5 140.3L230.7 139.0L231.9 139.0L233.1 140.3L234.3 139.0L235.5 136.4L236.7 139.0L237.9 139.0L239.1 138.0L240.3 140.3L241.5 139.0L242.7 139.0L243.9 139.0L245.1 139.0L246.3 139.0L247.5 138.0L248.7 136.4L249.9 140.3L251.1 138.0L252.3 139.0L253.5 139.0L254.7 139.0L255.9 138.0L257.1 138.0L258.3 139.0L259.5 139.0L260.7 139.0L261.9 140.3L263.1 139.0L264.3 139.0L265.5 140.3L266.7 139.0L267.9 139.0L269.1 139.0L270.3 139.0L271.5 140.3L272.7 139.0L273.9 140.3L275.1 139.0L276.3 139.0L277.5 136.4L278.7 139.0L279.9 139.0L281.1 139.0L282.3 139.0L283.5 138.0L284.7 138.0L285.9 138.0L287.1 140.3L288.3 139.0L289.5 139.0L290.7 139.0L291.9 139.0L293.1 136.4L294.3 139.0L295.5 140.3L296.7 140.3L297.9 139.0L299.1 139.0L300.0 139.0" stroke="#F2F200" stroke-width="1.6" fill="none" stroke-linejoin="round"/>
<line x1="262" y1="138.6" x2="515" y2="138.6" stroke="#F2F200" stroke-width="2.2"/>
<line x1="300" y1="138" x2="515" y2="138" stroke="#F2F200" stroke-width="4"/>
<path d="M304.8 139v2.6M364.8 139v2.6M367.2 139v2.6M372.0 137v-3.6M376.8 137v-3.6M393.6 139v2.6M432.0 137v-3.6M439.2 137v-3.6M448.8 137v-3.6M458.4 139v2.6M463.2 137v-3.6M470.4 139v2.6M482.4 139v2.6M492.0 137v-3.6M494.4 137v-3.6M501.6 137v-3.6M511.2 137v-3.6" stroke="#F2F200" stroke-width="1.2" fill="none"/>
<path d="M514.6 139.2L516.2 147.0L517.8 158.0" stroke="#F2F200" stroke-width="1.8" fill="none" stroke-linejoin="round"/>
<line x1="517.6" y1="159.6" x2="818.8" y2="159.6" stroke="#F2F200" stroke-width="4.2"/>
<line x1="818.1" y1="158" x2="818.1" y2="325" stroke="#D8D800" stroke-width="1.5"/>
<line x1="818" y1="324.4" x2="933.7" y2="324.4" stroke="#F2F200" stroke-width="2.6"/>
<line x1="830" y1="326.3" x2="933.7" y2="326.3" stroke="#F2F200" stroke-width="1.6" stroke-dasharray="2.4 1.2 1.2 1.2 3.6 1.2 1.2 2.4 4.8 1.2"/>
<path d="M820.0 323.4L821.2 324.4L822.4 323.4L823.6 323.4L824.8 323.4L826.0 323.4L827.2 323.4L828.4 322.6L829.6 324.4L830.8 323.4L832.0 322.6L833.2 324.4L834.4 324.4L835.6 324.4L836.8 322.6L838.0 323.4L839.2 323.4L840.4 323.4L841.6 322.6L842.8 323.4L844.0 324.4L845.2 323.4L846.4 324.4L847.6 322.6L848.8 324.4L850.0 323.4L851.2 323.4L852.4 322.6L853.6 323.4L854.8 323.4L856.0 324.4L857.2 323.4L858.4 323.4L859.6 323.4L860.8 323.4L862.0 323.4L863.2 323.4L864.4 323.4L865.6 323.4L866.8 323.4L868.0 323.4L869.2 323.4L870.4 323.4L871.6 323.4L872.8 323.4L874.0 324.4L875.2 324.4L876.4 324.4L877.6 323.4L878.8 322.6L880.0 324.4L881.2 324.4L882.4 323.4L883.6 323.4L884.8 323.4L886.0 322.6L887.2 322.6L888.4 322.6L889.6 323.4L890.8 324.4L892.0 323.4L893.2 322.6L894.4 323.4L895.6 323.4L896.8 323.4L898.0 322.6L899.2 323.4L900.4 323.4L901.6 323.4L902.8 324.4L904.0 323.4L905.2 323.4L906.4 323.4L907.6 322.6L908.8 323.4L910.0 324.4L911.2 322.6L912.4 324.4L913.6 323.4L914.8 324.4L916.0 324.4L917.2 323.4L918.4 322.6L919.6 323.4L920.8 323.4L922.0 323.4L923.2 323.4L924.4 323.4L925.6 323.4L926.8 323.4L928.0 323.4L929.2 323.4L930.4 324.4L931.6 323.4L932.8 323.4L933.7 323.4" stroke="#F2F200" stroke-width="1.0" fill="none" stroke-linejoin="round"/>
<line x1="229.5" y1="138.8" x2="514.5" y2="138.8" stroke="#FF9A70" stroke-width="1.1" stroke-dasharray="5 1.6 1.2 1.6" stroke-dashoffset="5.7"/>
<line x1="518" y1="161.4" x2="818" y2="161.4" stroke="#F2F200" stroke-width="1.4"/>
<path d="M775.3 323.4h13M781.8 317v13" stroke="#F0F0F0" stroke-width="1.5" fill="none"/>
<path d="M0.8 314 H15.8 L23.4 324 L15.8 334.2 H0.8 Z" fill="#000" stroke="#F2F200" stroke-width="1.4"/>
<text x="9.2" y="330.2" fill="#F2F200" class="cn" text-anchor="middle" style="font-size:17.5px" stroke="#F2F200" stroke-width="0.4">2</text>
<rect x="30.8" y="540.4" width="223.6" height="81.6" rx="5" fill="#000" stroke="#8CBCD4" stroke-width="2"/>
<circle cx="42.4" cy="551.2" r="9.6" fill="#F0F000"/>
<text x="42.4" y="556.8000000000001" fill="#000" class="cn" text-anchor="middle" stroke="#000" stroke-width="0.5">2</text>
<text x="0" y="0" transform="translate(58.5 556.4) scale(1.4 0.85)" fill="#DADADA" class="tr" text-anchor="middle">△</text>
<text x="63.7" y="559.4" fill="#DADADA" >y:400.0mv</text>
<text x="51.7" y="585.6" fill="#DADADA" >y1:2.68v</text>
<text x="51.7" y="611.9" fill="#DADADA" >y2:3.08v</text>
<rect x="380" y="645.6" width="577.4" height="70.9" fill="#0063A6"/>
<rect x="0" y="623" width="382.6" height="97" fill="#66A4BE"/>
<rect x="250" y="624" width="4" height="47" fill="#58B0DC"/>
<rect x="1.6" y="624.2" width="248" height="23.3" rx="4" fill="#000"/>
<rect x="1.6" y="648" width="248" height="22.6" rx="4" fill="#000"/>
<circle cx="12" cy="636.2" r="9.6" fill="#F00000"/>
<text x="12" y="641.8000000000001" fill="#2A0000" class="cn" text-anchor="middle" stroke="#2A0000" stroke-width="0.5">1</text>
<text x="21.3" y="643.4" fill="#B80014" >5V-</text>
<text x="126.7" y="643.4" fill="#B80014" >0.00div</text>
<circle cx="12" cy="660.6" r="9.6" fill="#F0F000"/>
<text x="12" y="666.2" fill="#000" class="cn" text-anchor="middle" stroke="#000" stroke-width="0.5">2</text>
<text x="21.3" y="667.6" fill="#C8C81E" >1V-</text>
<text x="126.7" y="667.6" fill="#C8C81E" >0.00div</text>
<rect x="254.4" y="623.8" width="125.4" height="46.6" rx="7" fill="#000"/>
<text x="256.5" y="640.8" fill="#DADADA" >(1.25KS/s)</text>
<text x="261.7" y="664.8" fill="#DADADA" >Depth:10K</text>
<rect x="1.4" y="673.8" width="378.4" height="43.2" rx="5" fill="#000"/>
<circle cx="11.4" cy="684.4" r="9.6" fill="#F0F000"/>
<text x="11.4" y="690.0" fill="#000" class="cn" text-anchor="middle" stroke="#000" stroke-width="0.5">2</text>
<text x="24.7" y="689.8" fill="#D2D23C" xml:space="preserve">F:  ?</text>
<circle cx="11.4" cy="706.8" r="9.6" fill="#F0F000"/>
<text x="11.4" y="712.4" fill="#000" class="cn" text-anchor="middle" stroke="#000" stroke-width="0.5">2</text>
<text x="24.9" y="712.8" fill="#D2D23C" >+D:41.6%</text>
<circle cx="202.3" cy="684.4" r="9.6" fill="#F0F000"/>
<text x="202.3" y="690.0" fill="#000" class="cn" text-anchor="middle" stroke="#000" stroke-width="0.5">2</text>
<text x="216.7" y="689.8" fill="#D2D23C" >Vk:2.361v</text>
<circle cx="202.3" cy="706.8" r="9.6" fill="#F0F000"/>
<text x="202.3" y="712.4" fill="#000" class="cn" text-anchor="middle" stroke="#000" stroke-width="0.5">2</text>
<text x="216.7" y="712.8" fill="#D2D23C" >V:1.909v</text>
<rect x="383.4" y="624" width="118.4" height="21.4" rx="10.7" fill="#000"/>
<text x="398.7" y="640.8" fill="#DADADA" >M:400ms</text>
<rect x="797.6" y="624" width="155" height="21.4" rx="10.7" fill="#000"/>
<circle cx="810.3" cy="633.9" r="9.6" fill="#F0F000"/>
<text x="810.3" y="639.5" fill="#000" class="cn" text-anchor="middle" stroke="#000" stroke-width="0.5">2</text>
<path d="M822 642.4 H832 L837.4 626.8 H846" fill="none" stroke="#DADADA" stroke-width="1.4"/>
<text x="847.7" y="641.6" fill="#DADADA" >0.00mV</text>
<rect x="385.0" y="648.2" width="110.6" height="68.3" rx="4" fill="#0046A0"/>
<rect x="386.6" y="649.4" width="106.2" height="64.7" rx="4" fill="#5CACF8"/>
<rect x="388.40000000000003" y="651.8" width="104.4" height="62.3" rx="2.5" fill="#0080E4"/>
<text x="415.7" y="674.2" fill="#002A78" class="lt" stroke="#002A78" stroke-width="0.35">Type</text>
<rect x="409" y="685.4" width="60.4" height="24" fill="#E8E8EC"/>
<text x="409.7" y="702.6" fill="#000" class="lt">Image</text>
<rect x="715.6999999999999" y="648.2" width="109.6" height="68.3" rx="4" fill="#0046A0"/>
<rect x="717.3" y="649.4" width="105.2" height="64.7" rx="4" fill="#5CACF8"/>
<rect x="719.0999999999999" y="651.8" width="103.4" height="62.3" rx="2.5" fill="#0080E4"/>
<text x="744.7" y="688.4" fill="#002A78" class="lt" stroke="#002A78" stroke-width="0.35">Save</text>
</svg>
</body>
</html>
